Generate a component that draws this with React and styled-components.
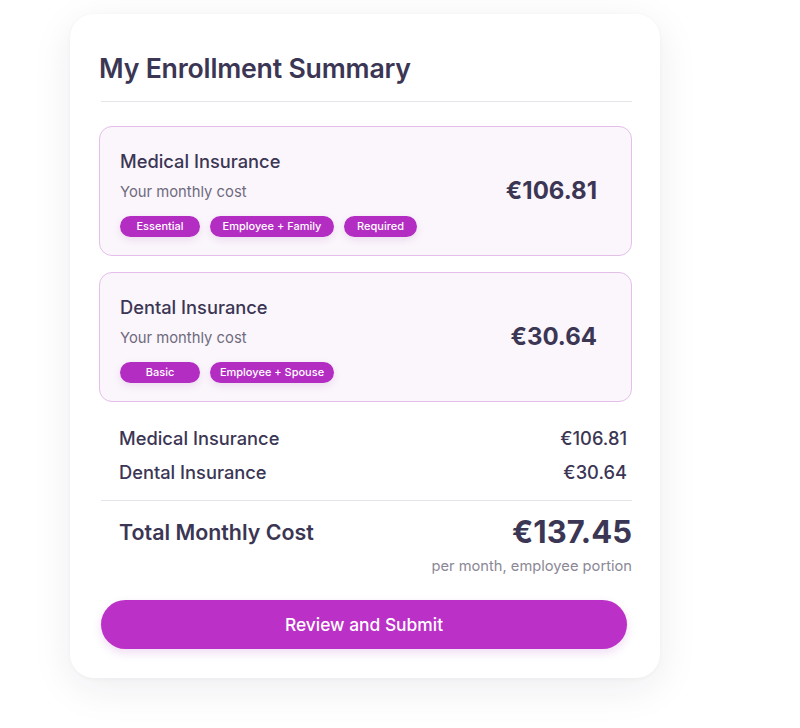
import React from 'react'
import styled, { createGlobalStyle } from 'styled-components'

const GlobalStyle = createGlobalStyle`
    body {
        margin: 0;
        background: #ffffff;
        font-family: Inter, "Noto Sans", sans-serif;
        color: #3b3654;
    }
`

const Page = styled.div`
    width: 800px;
    height: 728px;
    box-sizing: border-box;
    padding: 14px 0 0 70px;
`

const Card = styled.div`
    width: 590px;
    height: 664px;
    box-sizing: border-box;
    padding: 37px 28px 0 29px;
    background: #ffffff;
    border-radius: 24px;
    box-shadow: 0 10px 40px rgba(40, 30, 60, 0.08), 0 1px 4px rgba(40, 30, 60, 0.04);
`

const Title = styled.h1`
    margin: 0;
    font-size: 26.7px;
    font-weight: 600;
    line-height: 34px;
    letter-spacing: -0.2px;
    color: #3b3654;
`

const Divider = styled.hr`
    margin: ${p => p.$mt || 0}px 0 0 2px;
    border: 0;
    border-top: 1.5px solid #e6e4ea;
`

const PlanList = styled.div`
    display: flex;
    flex-direction: column;
    gap: 16px;
    margin-top: 24px;
`

const PlanCard = styled.div`
    display: flex;
    align-items: center;
    justify-content: space-between;
    height: 130px;
    box-sizing: border-box;
    padding: 0 34px 0 20px;
    background: #fbf6fc;
    border: 1px solid #e3bfe9;
    border-radius: 13px;
`

const PlanInfo = styled.div`
    display: flex;
    flex-direction: column;
    margin-top: 4px;
`

const PlanName = styled.div`
    font-size: 18.3px;
    font-weight: 500;
    color: #3b3654;
    line-height: 22px;
`

const PlanSub = styled.div`
    margin-top: 10px;
    font-size: 14.8px;
    color: #6e6a7c;
    line-height: 20px;
`

const Tags = styled.div`
    display: flex;
    gap: 10px;
    margin-top: 14px;
`

const Tag = styled.span`
    display: inline-flex;
    align-items: center;
    justify-content: center;
    height: 21px;
    width: ${p => p.$w}px;
    border-radius: 11px;
    background: #b42dc3;
    color: #ffffff;
    font-size: 11px;
    font-weight: 500;
    box-shadow: 0 3px 8px rgba(120, 30, 140, 0.12);
`

const PlanPrice = styled.div`
    font-size: 24px;
    font-weight: 700;
    color: #3b3654;
    margin-top: -2px;
`

const Breakdown = styled.div`
    display: flex;
    flex-direction: column;
    gap: 12px;
    padding: 25px 5px 0 20px;
`

const Row = styled.div`
    display: flex;
    justify-content: space-between;
    align-items: center;
    font-size: 18.3px;
    font-weight: 500;
    line-height: 22px;
    color: #3b3654;
`

const TotalRow = styled.div`
    display: flex;
    justify-content: space-between;
    align-items: flex-start;
    padding: 13px 0 0 20px;
`

const TotalLabel = styled.div`
    font-size: 21.4px;
    font-weight: 600;
    margin-top: 5px;
    color: #3b3654;
`

const TotalValue = styled.div`
    display: flex;
    flex-direction: column;
    align-items: flex-end;
`

const TotalAmount = styled.div`
    font-size: 31px;
    font-weight: 700;
    line-height: 36px;
    color: #3b3654;
`

const TotalNote = styled.div`
    margin-top: 7px;
    font-size: 14.7px;
    color: #8b8896;
`

const SubmitButton = styled.button`
    display: block;
    width: 526px;
    height: 49px;
    margin: 25px 0 0 2px;
    border: 0;
    border-radius: 25px;
    background: #bb30c6;
    color: #ffffff;
    font-family: inherit;
    font-size: 17.4px;
    font-weight: 500;
    box-shadow: 0 4px 10px rgba(150, 30, 170, 0.15);
`

const plans = [
    { name: 'Medical Insurance', price: '€106.81', tags: [['Essential', 80], ['Employee + Family', 124], ['Required', 73]] },
    { name: 'Dental Insurance', price: '€30.64', tags: [['Basic', 80], ['Employee + Spouse', 124]] },
]

const App = () => {
    return (
        <Page>
            <GlobalStyle />
            <Card>
                <Title>My Enrollment Summary</Title>
                <Divider $mt={16} />
                <PlanList>
                    {plans.map(plan => (
                        <PlanCard key={plan.name}>
                            <PlanInfo>
                                <PlanName>{plan.name}</PlanName>
                                <PlanSub>Your monthly cost</PlanSub>
                                <Tags>
                                    {plan.tags.map(([label, w]) => (
                                        <Tag key={label} $w={w}>{label}</Tag>
                                    ))}
                                </Tags>
                            </PlanInfo>
                            <PlanPrice>{plan.price}</PlanPrice>
                        </PlanCard>
                    ))}
                </PlanList>
                <Breakdown>
                    {plans.map(plan => (
                        <Row key={plan.name}>
                            <span>{plan.name}</span>
                            <span>{plan.price}</span>
                        </Row>
                    ))}
                </Breakdown>
                <Divider $mt={17} />
                <TotalRow>
                    <TotalLabel>Total Monthly Cost</TotalLabel>
                    <TotalValue>
                        <TotalAmount>€137.45</TotalAmount>
                        <TotalNote>per month, employee portion</TotalNote>
                    </TotalValue>
                </TotalRow>
                <SubmitButton>Review and Submit</SubmitButton>
            </Card>
        </Page>
    )
}

export default App
